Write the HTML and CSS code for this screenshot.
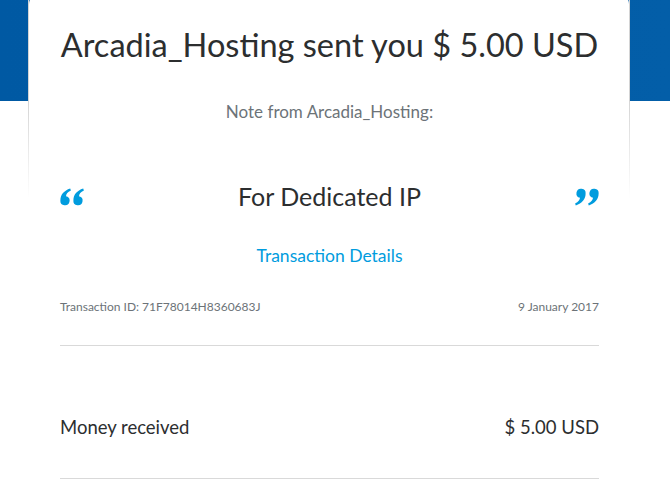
FILE: index.html
```html
<!DOCTYPE html>
<html lang="en">

<head>
    <meta charset="UTF-8">
    <meta name="viewport" content="width=device-width, initial-scale=1.0">
    <title>Money received</title>
    <link rel="stylesheet" href="styles.css">
</head>

<body>

    <div class="card">
        <div class="card-head">
            <h1 class="title">Arcadia_Hosting sent you $ 5.00 USD</h1>
            <p class="note-label">Note from Arcadia_Hosting:</p>

            <div class="note">
                <!-- opening quote -->
                <svg class="quote" viewBox="0 0 24 18" width="24" height="18">
                    <path d="M10.2 0.6 L10.9 2.6 C7.6 4 6.2 6 6 8.2 A4.6 4.6 0 1 1 0.4 12.2 C0.4 6.8 4 2.6 10.2 0.6 Z" />
                    <path d="M23.2 0.6 L23.9 2.6 C20.6 4 19.2 6 19 8.2 A4.6 4.6 0 1 1 13.4 12.2 C13.4 6.8 17 2.6 23.2 0.6 Z" />
                </svg>
                <span class="note-text">For Dedicated IP</span>
                <!-- closing quote -->
                <svg class="quote" viewBox="0 0 24 18" width="24" height="18">
                    <g transform="rotate(180 12 9)">
                        <path d="M10.2 0.6 L10.9 2.6 C7.6 4 6.2 6 6 8.2 A4.6 4.6 0 1 1 0.4 12.2 C0.4 6.8 4 2.6 10.2 0.6 Z" />
                        <path d="M23.2 0.6 L23.9 2.6 C20.6 4 19.2 6 19 8.2 A4.6 4.6 0 1 1 13.4 12.2 C13.4 6.8 17 2.6 23.2 0.6 Z" />
                    </g>
                </svg>
            </div>
        </div>

        <div class="card-body">
            <a class="details-link" href="#">Transaction Details</a>

            <div class="meta-row">
                <span>Transaction ID: 71F78014H8360683J</span>
                <span>9 January 2017</span>
            </div>

            <div class="amount-row">
                <span>Money received</span>
                <span>$ 5.00 USD</span>
            </div>
        </div>
    </div>

</body>

</html>
```

FILE: styles.css
```css
body {
    font-family: 'Lato', 'Open Sans', sans-serif;
    margin: 0;
    background: linear-gradient(to right, #0059a3, #035ea8) 0 0 / 100% 101px no-repeat, #fff;
    color: #2c2e2f;
}

.card {
    width: 600px;
    margin: -6px 0 0 29px;
    background-color: #fff;
    border-radius: 10px 10px 0 0;
}

.card-head {
    padding: 6px 30px 0 31px;
    border-left: 1px solid transparent;
    border-right: 1px solid transparent;
    border-image: linear-gradient(to bottom, #d4d4d4 0, #d4d4d4 50%, rgba(230, 230, 230, 0) 97%) 1;
    margin: 0 -1px;
    height: 210px;
    box-sizing: border-box;
}

.title {
    font-size: 32.5px;
    font-weight: normal;
    text-align: center;
    margin: 0;
    padding-top: 27px;
    line-height: 36px;
}

.note-label {
    font-size: 17px;
    color: #6c7378;
    text-align: center;
    margin: 0;
    padding-top: 39px;
    line-height: 20px;
}

.note {
    display: flex;
    justify-content: space-between;
    align-items: center;
    margin-top: 59px;
}

.quote {
    fill: #009cde;
    margin-top: 2px;
}

.note-text {
    font-size: 25px;
    line-height: 30px;
}

.card-body {
    padding: 0 30px 0 31px;
}

.details-link {
    display: block;
    text-align: center;
    color: #009cde;
    text-decoration: none;
    font-size: 17.5px;
    line-height: 22px;
    margin-top: 41px;
}

.meta-row {
    display: flex;
    justify-content: space-between;
    font-size: 12px;
    color: #6c7378;
    line-height: 14px;
    padding: 33px 0 31px;
    border-bottom: 1px solid #d9d9d9;
}

.amount-row {
    display: flex;
    justify-content: space-between;
    font-size: 18.5px;
    line-height: 24px;
    padding: 69px 0 39px;
    border-bottom: 1px solid #d9d9d9;
}
```
